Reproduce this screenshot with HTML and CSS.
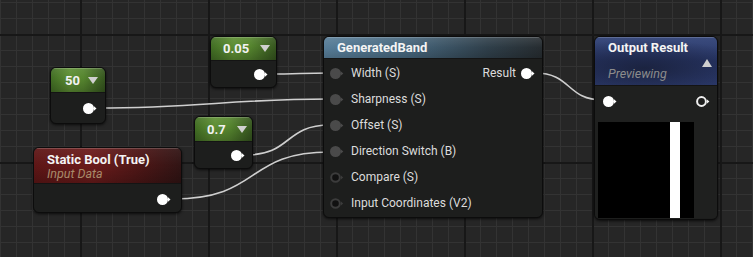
FILE: index.html
```html
<!DOCTYPE html>
<html>
<head>
<meta charset="utf-8">
<link rel="stylesheet" href="styles.css">
</head>
<body>
<div class="canvas">
  <svg class="wires" width="753" height="257" viewBox="0 0 753 257">
    <path d="M97 108 C 200 108, 230 99, 330 99"/>
    <path d="M268 74 C 300 74, 300 73, 330 73"/>
    <path d="M246 155 C 292 155, 284 125, 330 125"/>
    <path d="M173 199 C 262 199, 244 152, 330 152"/>
    <path d="M535 73 C 572 73, 566 100, 603 100"/>
  </svg>

  <div class="node const n50">
    <div class="hdr green"><span class="val">50</span><span class="drop"></span></div>
    <div class="body out"><svg class="pin" width="14" height="11" viewBox="0 0 14 11"><circle cx="5.5" cy="5.5" r="5.5" fill="#fff"/><path d="M11 3.3 L13.5 5.5 L11 7.7Z" fill="#fff"/></svg></div>
  </div>

  <div class="node const n005">
    <div class="hdr green"><span class="val">0.05</span><span class="drop"></span></div>
    <div class="body out"><svg class="pin" width="14" height="11" viewBox="0 0 14 11"><circle cx="5.5" cy="5.5" r="5.5" fill="#fff"/><path d="M11 3.3 L13.5 5.5 L11 7.7Z" fill="#fff"/></svg></div>
  </div>

  <div class="node const n07">
    <div class="hdr green"><span class="val">0.7</span><span class="drop"></span></div>
    <div class="body out"><svg class="pin" width="14" height="11" viewBox="0 0 14 11"><circle cx="5.5" cy="5.5" r="5.5" fill="#fff"/><path d="M11 3.3 L13.5 5.5 L11 7.7Z" fill="#fff"/></svg></div>
  </div>

  <div class="node sbool">
    <div class="hdr red">
      <div class="title">Static Bool (True)</div>
      <div class="sub tan">Input Data</div>
    </div>
    <div class="body out"><svg class="pin" width="14" height="11" viewBox="0 0 14 11"><circle cx="5.5" cy="5.5" r="5.5" fill="#fff"/><path d="M11 3.3 L13.5 5.5 L11 7.7Z" fill="#fff"/></svg></div>
  </div>

  <div class="node gband">
    <div class="hdr steel"><div class="title">GeneratedBand</div></div>
    <div class="body rows">
      <div class="row">
        <div class="in"><svg class="pin" width="14" height="11" viewBox="0 0 14 11"><circle cx="5.5" cy="5.5" r="5.5" fill="#4a4a4a"/><path d="M11 3.5 L13.3 5.5 L11 7.5Z" fill="#4a4a4a"/></svg><span>Width (S)</span></div>
        <div class="res"><span>Result</span><svg class="pin" width="14" height="11" viewBox="0 0 14 11"><circle cx="5.5" cy="5.5" r="5.5" fill="#fff"/><path d="M11 3.3 L13.5 5.5 L11 7.7Z" fill="#fff"/></svg></div>
      </div>
      <div class="row"><div class="in"><svg class="pin" width="14" height="11" viewBox="0 0 14 11"><circle cx="5.5" cy="5.5" r="5.5" fill="#4a4a4a"/><path d="M11 3.5 L13.3 5.5 L11 7.5Z" fill="#4a4a4a"/></svg><span>Sharpness (S)</span></div></div>
      <div class="row"><div class="in"><svg class="pin" width="14" height="11" viewBox="0 0 14 11"><circle cx="5.5" cy="5.5" r="5.5" fill="#4a4a4a"/><path d="M11 3.5 L13.3 5.5 L11 7.5Z" fill="#4a4a4a"/></svg><span>Offset (S)</span></div></div>
      <div class="row"><div class="in"><svg class="pin" width="14" height="11" viewBox="0 0 14 11"><circle cx="5.5" cy="5.5" r="5.5" fill="#4a4a4a"/><path d="M11 3.5 L13.3 5.5 L11 7.5Z" fill="#4a4a4a"/></svg><span>Direction Switch (B)</span></div></div>
      <div class="row"><div class="in"><svg class="pin" width="14" height="11" viewBox="0 0 14 11"><circle cx="5.5" cy="5.5" r="4.3" fill="#111" stroke="#3c3c3c" stroke-width="2"/><path d="M11 3.6 L13.2 5.5 L11 7.4Z" fill="#3c3c3c"/></svg><span>Compare (S)</span></div></div>
      <div class="row"><div class="in"><svg class="pin" width="14" height="11" viewBox="0 0 14 11"><circle cx="5.5" cy="5.5" r="4.3" fill="#111" stroke="#3c3c3c" stroke-width="2"/><path d="M11 3.6 L13.2 5.5 L11 7.4Z" fill="#3c3c3c"/></svg><span>Input Coordinates (V2)</span></div></div>
    </div>
  </div>

  <div class="node outres">
    <div class="hdr blue">
      <div class="title">Output Result</div>
      <div class="uprow"><span class="up"></span></div>
      <div class="sub grey">Previewing</div>
    </div>
    <div class="body obody">
      <div class="prow">
        <svg class="pin" width="14" height="11" viewBox="0 0 14 11"><circle cx="5.5" cy="5.5" r="5.5" fill="#fff"/><path d="M11 3.3 L13.5 5.5 L11 7.7Z" fill="#fff"/></svg>
        <svg class="pin" width="14" height="11" viewBox="0 0 14 11"><circle cx="5.5" cy="5.5" r="4.4" fill="#1e1f1e" stroke="#f0f0f0" stroke-width="2"/><path d="M11 3.4 L13.4 5.5 L11 7.6Z" fill="#f0f0f0"/></svg>
      </div>
      <div class="preview"><div class="band"></div></div>
    </div>
  </div>
</div>
</body>
</html>
```

FILE: styles.css
```css
html, body {
  margin: 0;
  padding: 0;
  background: #262626;
}
.canvas {
  position: relative;
  width: 753px;
  height: 257px;
  overflow: hidden;
  font-family: Roboto, "Liberation Sans", sans-serif;
  background-color: #262626;
  background-image:
    linear-gradient(to right, #171717 0 2px, transparent 2px),
    linear-gradient(to bottom, #171717 0 2px, transparent 2px),
    linear-gradient(to right, #333333 0 1px, transparent 1px),
    linear-gradient(to bottom, #333333 0 1px, transparent 1px);
  background-size: 128px 128px, 128px 128px, 16px 16px, 16px 16px;
  background-position: 80px 0, 0 34px, 0 0, 0 2px;
}
.wires {
  position: absolute;
  left: 0;
  top: 0;
}
.wires path {
  fill: none;
  stroke: #cfcfcf;
  stroke-width: 1.6;
}
.node {
  position: absolute;
  display: flex;
  flex-direction: column;
  background: #1d1e1d;
  border: 1px solid #0c0c0c;
  border-radius: 6px;
  box-shadow: 0 1px 3px rgba(0,0,0,0.7);
  overflow: hidden;
  box-sizing: border-box;
  color: #fff;
}
.hdr {
  box-sizing: border-box;
  border-bottom: 1px solid #141414;
  box-shadow: inset 0 1px 0 rgba(255,255,255,0.18);
}
.green {
  background:
    linear-gradient(to bottom, rgba(255,255,255,0.08), rgba(0,0,0,0) 40%, rgba(0,0,0,0.22)),
    linear-gradient(to right, #426e24, #5e8f34 35%, #56862f 60%, #36561f);
}
.red {
  background:
    linear-gradient(to bottom, rgba(255,255,255,0.06), rgba(0,0,0,0) 50%, rgba(0,0,0,0.2)),
    linear-gradient(to right, #5e1616, #6b1b1b 40%, #4a1616 75%, #311414);
}
.steel {
  background:
    linear-gradient(to bottom, rgba(255,255,255,0.10), rgba(0,0,0,0) 50%, rgba(0,0,0,0.15)),
    linear-gradient(to right, #577d98, #45647a 40%, #2f3f4a 75%, #262c30);
}
.blue {
  background:
    radial-gradient(ellipse 90% 60% at 40% 65%, #1b2340 0%, rgba(27,35,64,0) 100%),
    linear-gradient(to bottom, #3b4c7e, #273566 50%, #2c3a6c);
}
.const .hdr {
  display: flex;
  align-items: center;
  justify-content: space-between;
}
.val {
  font-size: 13px;
  font-weight: bold;
  color: #f2f2f2;
}
.drop {
  width: 0;
  height: 0;
  border-left: 5.5px solid transparent;
  border-right: 5.5px solid transparent;
  border-top: 7px solid #d0d0d0;
}
.body.out {
  display: flex;
  justify-content: flex-end;
  align-items: flex-start;
  flex: 1;
}
.pin {
  display: block;
  flex: none;
}
/* 50 */
.n50 { left: 50px; top: 67px; width: 56px; height: 57px; }
.n50 .hdr { height: 25px; padding: 0 7px 0 14px; }
.n50 .body { padding: 10px 8px 0 0; }
/* 0.05 */
.n005 { left: 210px; top: 36px; width: 67px; height: 52px; }
.n005 .hdr { height: 24px; padding: 0 6px 0 12px; }
.n005 .body { padding: 8px 8px 0 0; }
/* 0.7 */
.n07 { left: 194px; top: 116px; width: 59px; height: 53px; }
.n07 .hdr { height: 25px; padding: 0 5px 0 12px; }
.n07 .body { padding: 8px 7px 0 0; }
/* static bool */
.sbool { left: 33px; top: 147px; width: 149px; height: 66px; }
.sbool .hdr { height: 36px; padding: 4px 0 0 13px; }
.title {
  font-size: 13px;
  font-weight: bold;
  color: #f4f4f4;
  line-height: 15px;
}
.sub {
  font-size: 12.5px;
  font-style: italic;
  line-height: 14px;
}
.tan { color: #a88a6a; }
.grey { color: #8c8c8c; }
.sbool .body { padding: 10px 10px 0 0; }
/* generated band */
.gband { left: 323px; top: 36px; width: 220px; height: 182px; }
.gband .hdr { height: 22px; padding: 3px 0 0 13px; }
.rows {
  display: flex;
  flex-direction: column;
  padding: 1px 7px 0 6px;
}
.row {
  height: 26px;
  display: flex;
  align-items: center;
  justify-content: space-between;
}
.in, .res {
  display: flex;
  align-items: center;
  font-size: 12px;
  color: #dcdcdc;
}
.in span { margin-left: 7px; }
.res span { margin-right: 5px; }
/* output */
.outres { left: 594px; top: 36px; width: 124px; height: 184px; }
.outres .hdr {
  height: 49px;
  padding: 3px 5px 0 13px;
  display: flex;
  flex-direction: column;
}
.uprow {
  display: flex;
  justify-content: flex-end;
  height: 12px;
  align-items: flex-end;
}
.up {
  width: 0;
  height: 0;
  border-left: 5.5px solid transparent;
  border-right: 5.5px solid transparent;
  border-bottom: 8px solid #cfcfcf;
}
.obody {
  display: flex;
  flex-direction: column;
  background: #1f201f;
}
.prow {
  height: 30px;
  display: flex;
  align-items: center;
  justify-content: space-between;
  padding: 0 7px 0 8px;
}
.preview {
  margin: 6px 0 0 3px;
  width: 96px;
  height: 96px;
  background: #000;
  display: flex;
  padding-left: 72px;
  box-sizing: border-box;
}
.band {
  width: 10px;
  background: #fff;
}
```
